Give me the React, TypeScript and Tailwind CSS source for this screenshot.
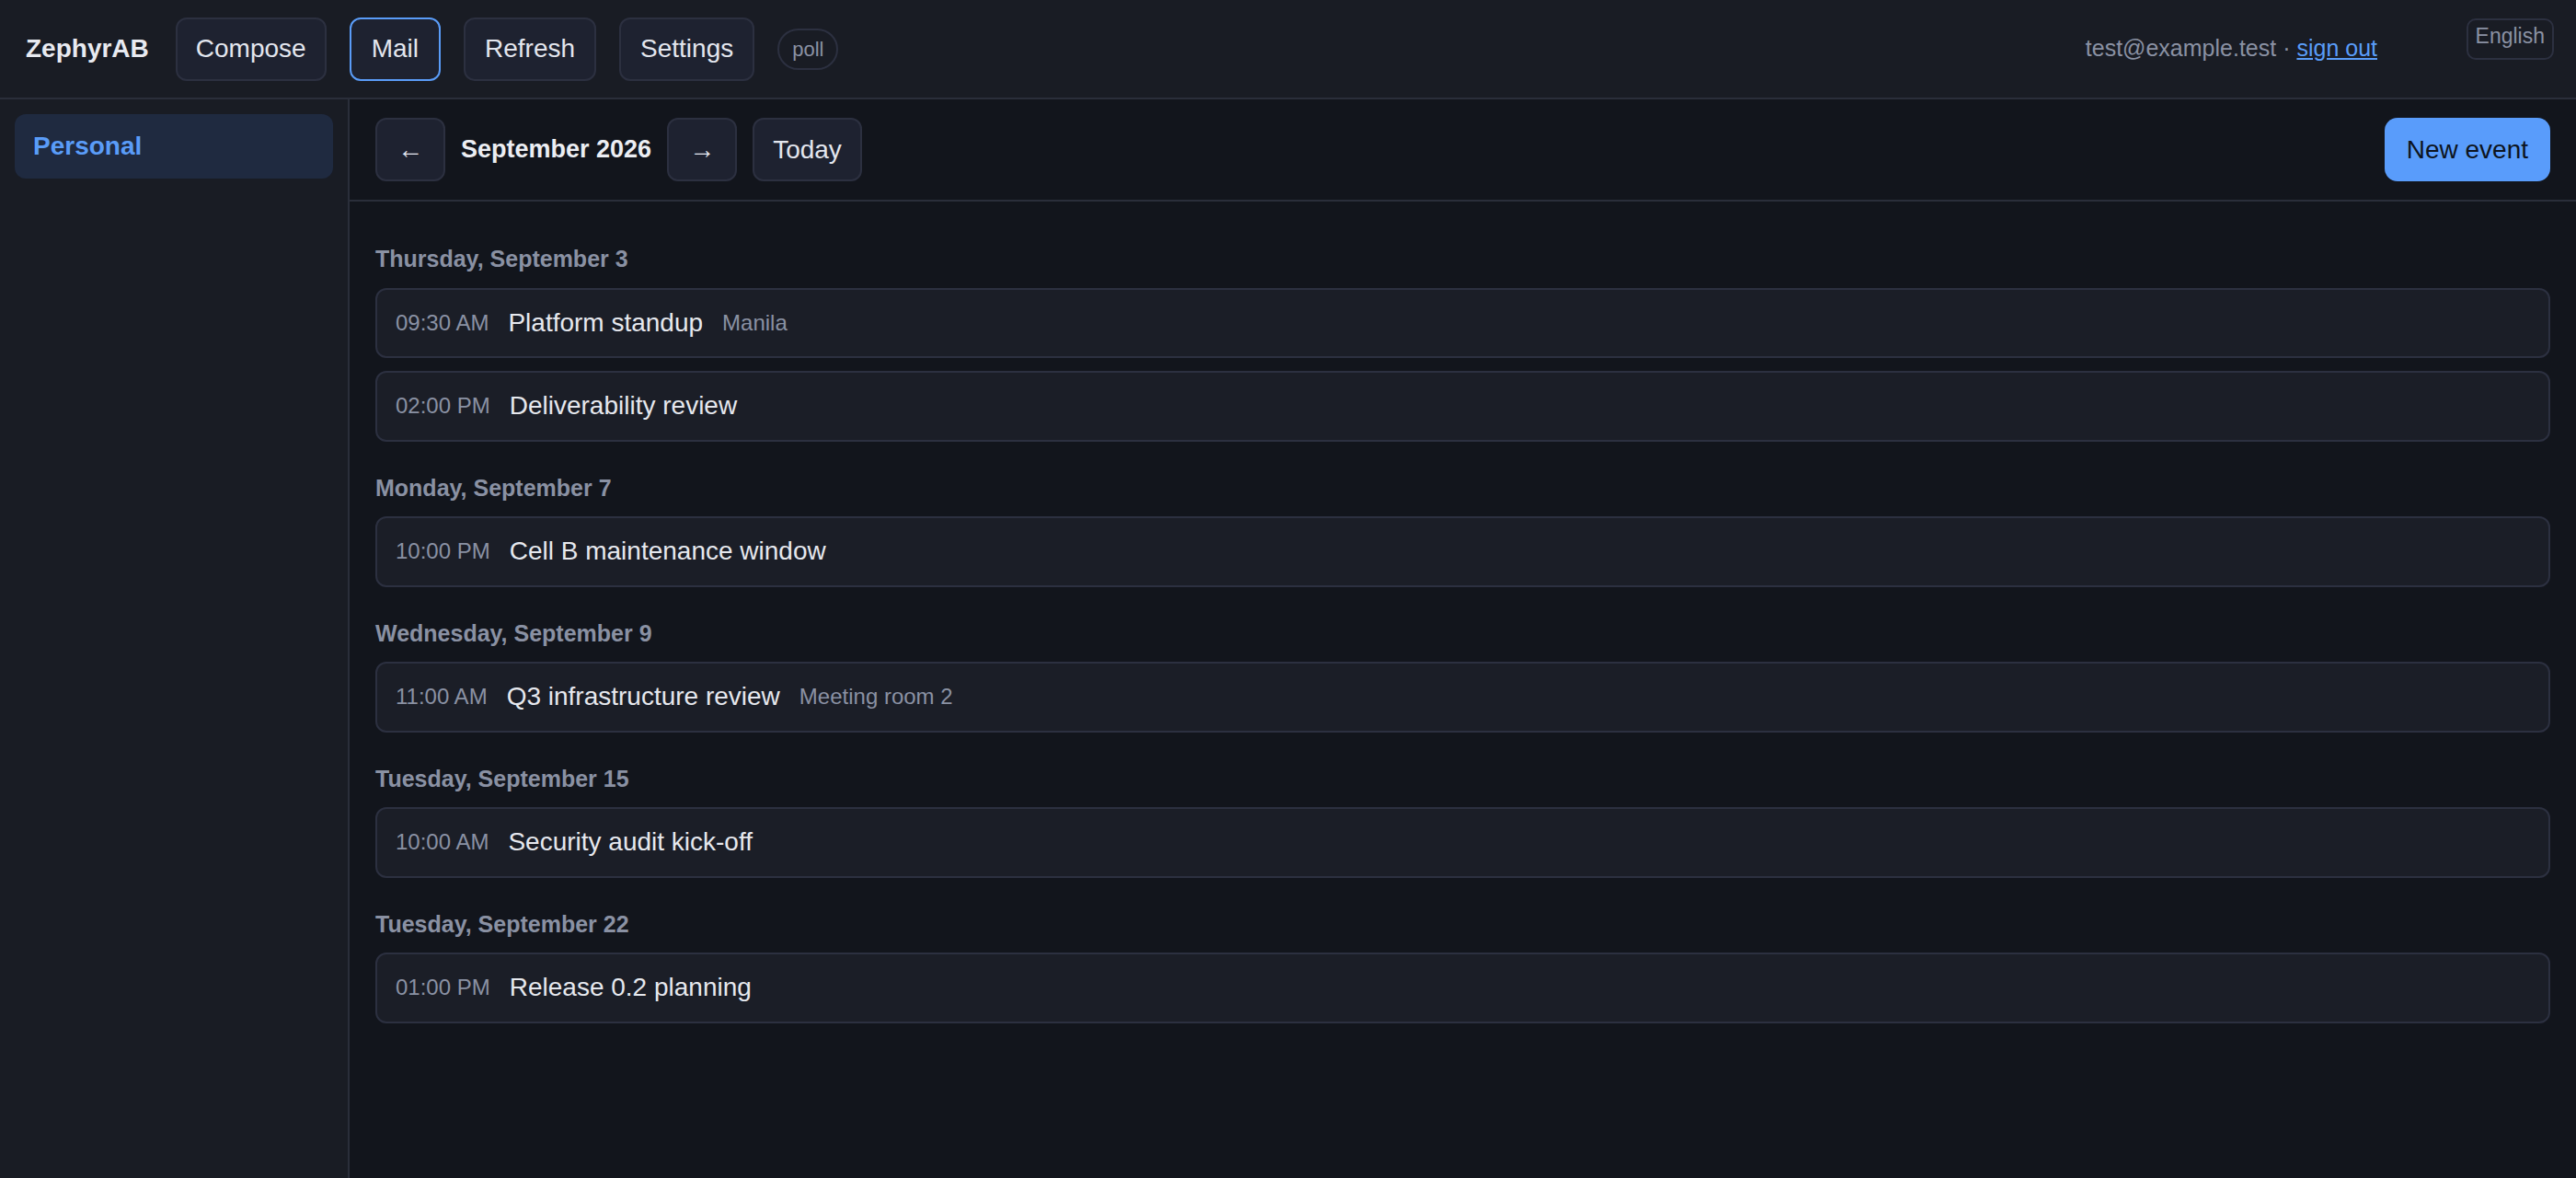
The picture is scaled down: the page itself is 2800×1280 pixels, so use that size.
import React from 'react';

interface CalEvent {
  time: string;
  title: string;
  location?: string;
}

interface DayGroup {
  label: string;
  events: CalEvent[];
}

const days: DayGroup[] = [
  {
    label: 'Thursday, September 3',
    events: [
      { time: '09:30 AM', title: 'Platform standup', location: 'Manila' },
      { time: '02:00 PM', title: 'Deliverability review' },
    ],
  },
  {
    label: 'Monday, September 7',
    events: [{ time: '10:00 PM', title: 'Cell B maintenance window' }],
  },
  {
    label: 'Wednesday, September 9',
    events: [{ time: '11:00 AM', title: 'Q3 infrastructure review', location: 'Meeting room 2' }],
  },
  {
    label: 'Tuesday, September 15',
    events: [{ time: '10:00 AM', title: 'Security audit kick-off' }],
  },
  {
    label: 'Tuesday, September 22',
    events: [{ time: '01:00 PM', title: 'Release 0.2 planning' }],
  },
];

function NavButton({
  children,
  active = false,
  pad = 'px-[21px]',
}: {
  children: React.ReactNode;
  active?: boolean;
  pad?: string;
}) {
  const border = active ? 'border-[#5a9cf8]' : 'border-[#2c3040]';
  return (
    <button className={`h-[69px] ${pad} rounded-[12px] border-2 ${border} bg-[#1e2230] text-[28px] text-[#e3e6ee]`}>
      {children}
    </button>
  );
}

export default function App() {
  return (
    <div className="relative flex flex-col w-full h-[1280px] bg-[#12151c] font-['Liberation_Sans',Arial,sans-serif] overflow-hidden">
      {/* Top bar */}
      <header className="flex items-center h-[108px] shrink-0 px-[28px] gap-[25px] bg-[#191c24] border-b-2 border-[#2a2e3a]">
        <span className="mr-[4px] text-[28px] font-bold text-[#e8eaf0]">ZephyrAB</span>
        <NavButton pad="px-[20px]">Compose</NavButton>
        <NavButton active pad="px-[22px]">
          Mail
        </NavButton>
        <NavButton>Refresh</NavButton>
        <NavButton>Settings</NavButton>
        <span className="flex items-center h-[45px] px-[14px] rounded-full border-2 border-[#2c3040] text-[22px] text-[#8a91a3]">
          poll
        </span>
        <div className="ml-auto mr-[188px] text-[25px] text-[#8a91a3]">
          test@example.test ·{' '}
          <a href="#" className="text-[#5a9cf8] underline">
            sign out
          </a>
        </div>
      </header>

      {/* Language switcher */}
      <div className="absolute top-[20px] right-[24px] h-[45px] px-[8px] pt-[6px] rounded-[10px] border-2 border-[#2c3040] text-[23px] leading-none text-[#8a91a3]">
        English
      </div>

      <div className="flex flex-1 min-h-0">
        {/* Sidebar */}
        <aside className="w-[380px] shrink-0 p-[16px] bg-[#191c24] border-r-2 border-[#2a2e3a]">
          <div className="flex items-center h-[70px] px-[20px] rounded-[12px] bg-[#1f2a40] text-[28px] font-bold text-[#5a9cf8]">
            Personal
          </div>
        </aside>

        {/* Main */}
        <main className="flex flex-col flex-1 min-w-0">
          <div className="flex items-center gap-[17px] px-[28px] py-[20px] border-b-2 border-[#2a2e3a]">
            <NavButton pad="px-[22px]">←</NavButton>
            <span className="text-[27px] font-bold text-[#eceef3]">September 2026</span>
            <NavButton pad="px-[22px]">→</NavButton>
            <NavButton pad="px-[20px]">Today</NavButton>
            <button className="ml-auto h-[69px] px-[24px] rounded-[14px] bg-[#599cfb] text-[28px] text-[#0d1420]">
              New event
            </button>
          </div>

          <div className="flex flex-col gap-[32px] px-[28px] pt-[44px]">
            {days.map((day) => (
              <section key={day.label}>
                <h3 className="mb-[12px] text-[25px] leading-[37.5px] font-bold text-[#8a91a3]">{day.label}</h3>
                <div className="flex flex-col gap-[14px]">
                  {day.events.map((ev) => (
                    <div
                      key={ev.title}
                      className="flex items-center gap-[21px] h-[76.5px] px-[20px] rounded-[12px] border-2 border-[#2c3040] bg-[#1b1e27]"
                    >
                      <span className="text-[24px] text-[#8a91a3]">{ev.time}</span>
                      <span className="text-[28px] text-[#e6e8ee]">{ev.title}</span>
                      {ev.location && <span className="text-[24px] text-[#8a91a3]">{ev.location}</span>}
                    </div>
                  ))}
                </div>
              </section>
            ))}
          </div>
        </main>
      </div>
    </div>
  );
}
